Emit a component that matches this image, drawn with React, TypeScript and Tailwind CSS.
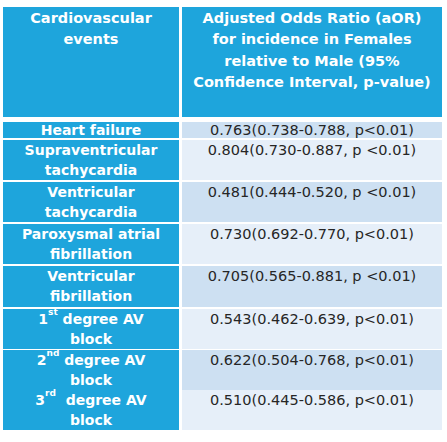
import type { ReactNode } from 'react';

const font = { fontFamily: "'DejaVu Sans', 'Liberation Sans', sans-serif" };

type Row = { label: ReactNode; value: string; h: string; dark: boolean };

const sup = (s: string) => <sup className="text-[9px] font-bold align-[5px] leading-none">{s}</sup>;

const rows: Row[] = [
  { label: 'Heart failure', value: '0.763(0.738-0.788, p<0.01)', h: 'h-[16px]', dark: true },
  { label: <>Supraventricular<br />tachycardia</>, value: '0.804(0.730-0.887, p <0.01)', h: 'h-[40px]', dark: false },
  { label: <>Ventricular<br />tachycardia</>, value: '0.481(0.444-0.520, p <0.01)', h: 'h-[40px]', dark: true },
  { label: <>Paroxysmal atrial<br />fibrillation</>, value: '0.730(0.692-0.770, p<0.01)', h: 'h-[40px]', dark: false },
  { label: <>Ventricular<br />fibrillation</>, value: '0.705(0.565-0.881, p <0.01)', h: 'h-[41px]', dark: true },
  { label: <>1{sup('st')} degree AV<br />block</>, value: '0.543(0.462-0.639, p<0.01)', h: 'h-[39px]', dark: false },
  { label: <>2{sup('nd')} degree AV<br />block</>, value: '0.622(0.504-0.768, p<0.01)', h: 'h-[38px]', dark: true },
  { label: <>3{sup('rd')}{'\u00a0 '}degree AV<br />block</>, value: '0.510(0.445-0.586, p<0.01)', h: 'h-[40px]', dark: false },
];

export default function App() {
  return (
    <div style={font} className="w-[447px] h-[442px] bg-white pt-[7px] pl-[3px] overflow-hidden">
      <div className="w-[439px]">
        <div className="grid grid-cols-[176px_260px] gap-x-[3px] h-[110px]">
          <div className="bg-[#1ea5dc] text-white font-bold text-[14.5px] leading-[21px] text-center pt-[1px]">
            Cardiovascular
            <br />
            events
          </div>
          <div className="bg-[#1ea5dc] text-white font-bold text-[14.5px] leading-[21.3px] text-center pt-[1px]">
            Adjusted Odds Ratio (aOR)
            <br />
            for incidence in Females
            <br />
            relative to Male (95%
            <br />
            Confidence Interval, p-value)
          </div>
        </div>
        <div className="mt-[5px] flex flex-col gap-[2px]">
          {rows.map((r, i) => (
            <div key={i} className={`grid grid-cols-[176px_260px] gap-x-[3px] ${r.h}`}>
              <div
                className={`bg-[#1ea5dc] text-white font-bold text-[14px] text-center overflow-visible whitespace-nowrap ${
                  i === 0 ? 'leading-[16px]' : 'leading-[20px]'
                }`}
              >
                {r.label}
              </div>
              <div
                className={`text-[#262626] text-[14.5px] text-center whitespace-nowrap ${
                  r.dark ? 'bg-[#cde0f2]' : 'bg-[#e6eff9]'
                } ${i === 0 ? 'leading-[16px]' : 'leading-[20px]'}`}
              >
                {r.value}
              </div>
            </div>
          ))}
        </div>
      </div>
    </div>
  );
}
